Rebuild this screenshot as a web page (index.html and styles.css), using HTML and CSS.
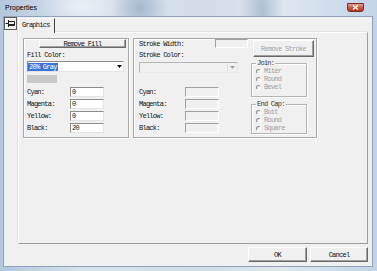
FILE: index.html
```html
<!DOCTYPE html>
<html lang="en">
<head>
    <meta charset="UTF-8">
    <title>Properties</title>
    <link rel="stylesheet" href="styles.css">
</head>
<body>
    <div class="window">
        <div class="titlebar">
            <span class="title">Properties</span>
            <button class="close" title="Close">
                <svg width="7" height="5" viewBox="0 0 7 5"><path d="M1 0.5L6 4.5M6 0.5L1 4.5" stroke="#fff" stroke-width="1.3"/></svg>
            </button>
        </div>

        <div class="client">
            <div class="main">
                <div class="side">
                    <button class="pin" title="Pin">
                        <svg width="11" height="11" viewBox="0 0 11 11"><path d="M0.5 5.5H3.5M3.5 2V9M4 3.5H9.5V7.5H4M4 6.5H9.5" stroke="#222" stroke-width="1" fill="none"/></svg>
                    </button>
                </div>

                <div class="tabs">
                    <div class="tab-strip">
                        <div class="tab">Graphics</div>
                    </div>

                    <div class="panel">
                        <!-- Fill -->
                        <div class="group fill">
                            <button class="btn btn-fill">Remove Fill</button>
                            <div class="label">Fill Color:</div>
                            <div class="select">
                                <span class="sel-text">20% Gray</span>
                                <span class="arrow"><svg width="5" height="3" viewBox="0 0 5 3"><path d="M0 0H5L2.5 3Z" fill="#000"/></svg></span>
                            </div>
                            <div class="swatch"></div>
                            <div class="rows">
                                <div class="row"><span class="row-label">Cyan:</span><span class="input">0</span></div>
                                <div class="row"><span class="row-label">Magenta:</span><span class="input">0</span></div>
                                <div class="row"><span class="row-label">Yellow:</span><span class="input">0</span></div>
                                <div class="row"><span class="row-label">Black:</span><span class="input">20</span></div>
                            </div>
                        </div>

                        <!-- Stroke -->
                        <div class="group stroke">
                            <div class="stroke-main">
                                <div class="width-row">
                                    <span class="row-label">Stroke Width:</span>
                                    <span class="input disabled small"></span>
                                </div>
                                <div class="label">Stroke Color:</div>
                                <div class="select disabled">
                                    <span class="arrow"><svg width="5" height="3" viewBox="0 0 5 3"><path d="M0 0H5L2.5 3Z" fill="#a0a0a0"/></svg></span>
                                </div>
                                <div class="rows">
                                    <div class="row"><span class="row-label">Cyan:</span><span class="input disabled"></span></div>
                                    <div class="row"><span class="row-label">Magenta:</span><span class="input disabled"></span></div>
                                    <div class="row"><span class="row-label">Yellow:</span><span class="input disabled"></span></div>
                                    <div class="row"><span class="row-label">Black:</span><span class="input disabled"></span></div>
                                </div>
                            </div>
                            <div class="stroke-side">
                                <button class="btn btn-stroke" disabled>Remove Stroke</button>
                                <fieldset class="options join">
                                    <legend>Join:</legend>
                                    <div class="radio"><span class="dot"></span>Miter</div>
                                    <div class="radio"><span class="dot"></span>Round</div>
                                    <div class="radio"><span class="dot"></span>Bevel</div>
                                </fieldset>
                                <fieldset class="options cap">
                                    <legend>End Cap:</legend>
                                    <div class="radio"><span class="dot"></span>Butt</div>
                                    <div class="radio"><span class="dot"></span>Round</div>
                                    <div class="radio"><span class="dot"></span>Square</div>
                                </fieldset>
                            </div>
                        </div>
                    </div>
                </div>
            </div>

            <div class="footer">
                <button class="btn btn-ok">OK</button>
                <button class="btn btn-cancel">Cancel</button>
            </div>
        </div>
    </div>
</body>
</html>
```

FILE: styles.css
```css
* {
    box-sizing: border-box;
}
body {
    margin: 0;
    font-family: "Liberation Mono", "DejaVu Sans Mono", monospace;
    font-size: 7px;
    letter-spacing: -0.75px;
    color: #111;
}
.window {
    width: 377px;
    height: 271px;
    display: flex;
    flex-direction: column;
    background:
        radial-gradient(ellipse 28px 30px at 140px 8px, rgba(105,135,170,0.45), transparent),
        radial-gradient(ellipse 22px 60px at 262px 10px, rgba(105,135,170,0.4), transparent),
        radial-gradient(ellipse 40px 20px at 80px 6px, rgba(255,255,255,0.5), transparent),
        linear-gradient(to right, #b3c7dd, #d8e2ed 22%, #d2dde9 55%, #dfe7f0 75%, #c2d4e8);
}
.titlebar {
    height: 17px;
    display: flex;
    align-items: flex-start;
}
.title {
    margin: 4px 0 0 5px;
    font-family: "Liberation Sans", Arial, sans-serif;
    font-size: 7px;
    letter-spacing: 0;
    line-height: 8px;
    color: #000;
}
.close {
    margin: 3px 13px 0 auto;
    width: 17px;
    height: 9px;
    padding: 0;
    display: flex;
    align-items: center;
    justify-content: center;
    border: 1px solid #7a2a1e;
    border-radius: 0 0 3px 3px;
    background: linear-gradient(#e7a596, #cf5a42 50%, #b8351f);
}
.client {
    flex: 1;
    margin: 0 5px 5px 4px;
    background: #f0f0f0;
    display: flex;
    flex-direction: column;
    box-shadow: 0 0 0 1px #8ea3bb;
}
.main {
    flex: 1;
    display: flex;
}
.side {
    width: 14px;
}
.pin {
    display: flex;
    align-items: center;
    justify-content: center;
    width: 13px;
    height: 13px;
    padding: 0;
    border: 1px solid #5a5a5a;
    background: #f0f0f0;
    box-shadow: inset 1px 1px 0 #fff;
}
.tabs {
    flex: 1;
    display: flex;
    flex-direction: column;
    margin-right: 4px;
}
.tab-strip {
    height: 15px;
    display: flex;
    align-items: flex-end;
}
.tab {
    position: relative;
    z-index: 1;
    width: 37px;
    height: 15px;
    margin-bottom: -1px;
    padding-left: 3px;
    line-height: 13px;
    background: #f0f0f0;
    border: 1px solid;
    border-color: #fff #404040 transparent #fff;
    border-bottom: none;
    box-shadow: -1px 0 0 #e3e3e3;
}
.panel {
    flex: 1;
    display: flex;
    align-items: flex-start;
    gap: 4px;
    padding: 5px 0 0 4px;
    border: 1px solid;
    border-color: #fff #9c9c9c #9c9c9c #fff;
    box-shadow: -1px -1px 0 #e3e3e3;
}
.group {
    height: 100px;
    border: 1px solid #a6a6a6;
    box-shadow: inset 1px 1px 0 #fff, 1px 1px 0 #fff;
}
.fill {
    width: 106px;
    padding-left: 3px;
    display: flex;
    flex-direction: column;
    align-items: flex-start;
}
.btn {
    display: flex;
    align-items: center;
    justify-content: center;
    padding: 0;
    font: inherit;
    letter-spacing: inherit;
    color: #111;
    background: #f0f0f0;
    border: 1px solid;
    border-color: #fff #696969 #696969 #fff;
    box-shadow: inset -1px -1px 0 #a0a0a0;
}
.btn:disabled {
    color: #a0a0a0;
    text-shadow: 1px 1px 0 #fff;
}
.btn-fill {
    margin-left: 12px;
    width: 87px;
    height: 9px;
}
.label {
    height: 8px;
    line-height: 8px;
    margin-top: 3px;
}
.select {
    margin-top: 2px;
    width: 97px;
    height: 11px;
    display: flex;
    background: #fff;
    border: 1px solid;
    border-color: #8c8c8c #e3e3e3 #e3e3e3 #8c8c8c;
}
.sel-text {
    height: 8px;
    margin: 1px 0 0 0;
    padding: 0 1px;
    line-height: 8px;
    color: #fff;
    background: #3875d7;
}
.arrow {
    margin-left: auto;
    width: 8px;
    display: flex;
    align-items: center;
    justify-content: center;
}
.select.disabled {
    margin-top: 3px;
    width: 99px;
    background: #f0f0f0;
    border-color: #b4b4b4 #e8e8e8 #e8e8e8 #b4b4b4;
}
.select.disabled .arrow {
    width: 9px;
    margin: 1px 1px 1px auto;
    border-left: 1px solid #dcdcdc;
}
.swatch {
    margin-top: 3px;
    width: 30px;
    height: 8px;
    background: #c8c8c8;
}
.rows {
    margin-top: 4px;
    display: flex;
    flex-direction: column;
    gap: 2px;
}
.row {
    height: 10px;
    display: flex;
    align-items: center;
}
.fill .row-label {
    width: 43px;
}
.input {
    width: 34px;
    height: 10px;
    padding-left: 1px;
    line-height: 8px;
    background: #fff;
    border: 1px solid;
    border-color: #8c8c8c #e3e3e3 #e3e3e3 #8c8c8c;
}
.input.disabled {
    background: #f0f0f0;
    border-color: #a0a0a0 #fff #fff #a0a0a0;
}
.input.small {
    width: 33px;
    height: 9px;
}
.stroke {
    width: 184px;
    display: flex;
}
.stroke-main {
    width: 115px;
    padding-left: 5px;
    display: flex;
    flex-direction: column;
    align-items: flex-start;
}
.width-row {
    height: 9px;
    display: flex;
    align-items: center;
}
.width-row .row-label {
    width: 76px;
}
.stroke-main .rows {
    margin-top: 14px;
}
.stroke-main .row .row-label {
    width: 46px;
}
.stroke-side {
    display: flex;
    flex-direction: column;
    align-items: flex-start;
}
.btn-stroke {
    margin: 1px 0 0 4px;
    width: 61px;
    height: 17px;
}
.options {
    margin: 2px 0 0 2px;
    width: 56px;
    min-inline-size: 0;
    padding: 0 4px 5px;
    border: 1px solid #b4b4b4;
    box-shadow: inset 1px 1px 0 #fff, 1px 1px 0 #fff;
}
.options.cap {
    margin-top: 3px;
    padding-bottom: 1px;
}
legend {
    padding: 0 1px;
    height: 8px;
    line-height: 8px;
    color: #333;
}
.radio {
    height: 8px;
    line-height: 8px;
    display: flex;
    align-items: center;
    gap: 3px;
    color: #a0a0a0;
}
.dot {
    width: 5px;
    height: 5px;
    border-radius: 50%;
    border: 1px solid;
    border-color: #909090 #fff #fff #909090;
}
.footer {
    height: 22px;
    display: flex;
    justify-content: flex-end;
    gap: 3px;
    padding: 3px 4px 4px 0;
}
.btn-ok {
    width: 59px;
    height: 15px;
}
.btn-cancel {
    width: 58px;
    height: 15px;
}
```
